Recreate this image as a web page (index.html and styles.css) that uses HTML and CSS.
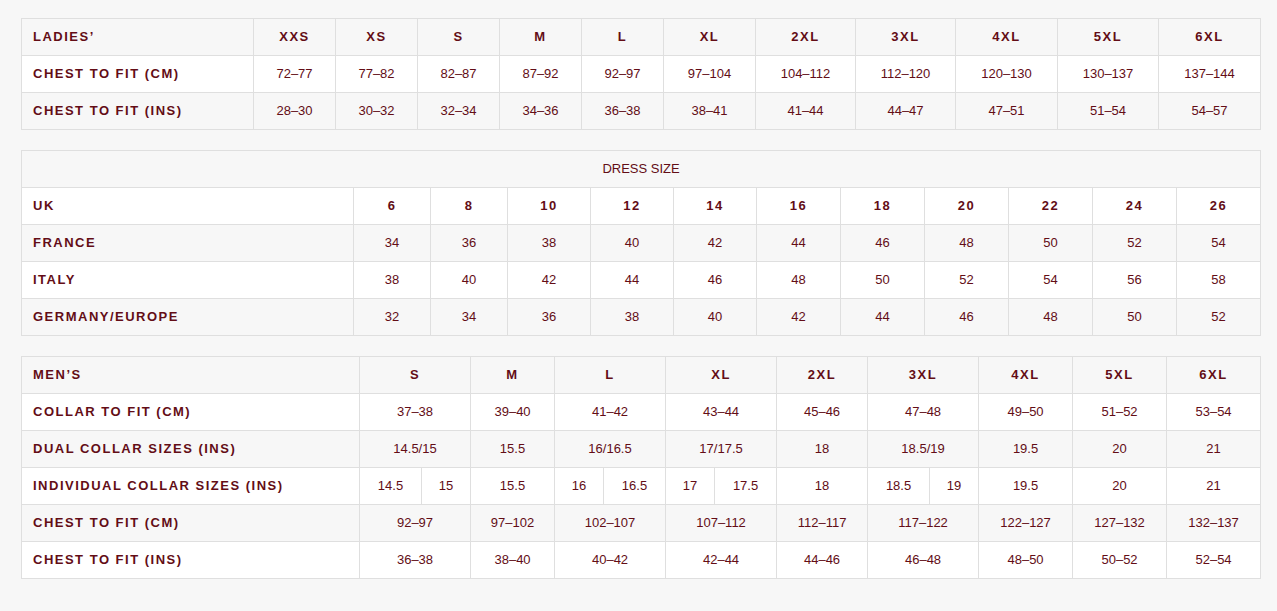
FILE: index.html
```html
<!DOCTYPE html>
<html lang="en">
<head>
<meta charset="utf-8">
<title>Size Guide</title>
<link rel="stylesheet" href="styles.css">
</head>
<body>
<main class="page">
  <table class="chart chart-ladies">
    <colgroup>
      <col class="c-label"><col class="w82"><col class="w82"><col class="w82"><col class="w82"><col class="w82"><col class="w92"><col class="w100"><col class="w100"><col class="w102"><col class="w101"><col class="w102">
    </colgroup>
    <tr class="row-grey">
      <th class="label">LADIES’</th><th>XXS</th><th>XS</th><th>S</th><th>M</th><th>L</th><th>XL</th><th>2XL</th><th>3XL</th><th>4XL</th><th>5XL</th><th>6XL</th>
    </tr>
    <tr class="row-white">
      <th class="label">CHEST TO FIT (CM)</th><td>72–77</td><td>77–82</td><td>82–87</td><td>87–92</td><td>92–97</td><td>97–104</td><td>104–112</td><td>112–120</td><td>120–130</td><td>130–137</td><td>137–144</td>
    </tr>
    <tr class="row-grey">
      <th class="label">CHEST TO FIT (INS)</th><td>28–30</td><td>30–32</td><td>32–34</td><td>34–36</td><td>36–38</td><td>38–41</td><td>41–44</td><td>44–47</td><td>47–51</td><td>51–54</td><td>54–57</td>
    </tr>
  </table>

  <table class="chart chart-dress">
    <colgroup>
      <col class="c-label2"><col class="w77"><col class="w77"><col class="w83"><col class="w83"><col class="w83"><col class="w84"><col class="w84"><col class="w84"><col class="w84"><col class="w84"><col class="w84">
    </colgroup>
    <tr class="row-grey">
      <td class="caption" colspan="12">DRESS SIZE</td>
    </tr>
    <tr class="row-white">
      <th class="label">UK</th><th>6</th><th>8</th><th>10</th><th>12</th><th>14</th><th>16</th><th>18</th><th>20</th><th>22</th><th>24</th><th>26</th>
    </tr>
    <tr class="row-grey">
      <th class="label">FRANCE</th><td>34</td><td>36</td><td>38</td><td>40</td><td>42</td><td>44</td><td>46</td><td>48</td><td>50</td><td>52</td><td>54</td>
    </tr>
    <tr class="row-white">
      <th class="label">ITALY</th><td>38</td><td>40</td><td>42</td><td>44</td><td>46</td><td>48</td><td>50</td><td>52</td><td>54</td><td>56</td><td>58</td>
    </tr>
    <tr class="row-grey">
      <th class="label">GERMANY/EUROPE</th><td>32</td><td>34</td><td>36</td><td>38</td><td>40</td><td>42</td><td>44</td><td>46</td><td>48</td><td>50</td><td>52</td>
    </tr>
  </table>

  <table class="chart chart-mens">
    <colgroup>
      <col class="c-label3"><col class="w62"><col class="w49"><col class="w84"><col class="w49"><col class="w62"><col class="w49"><col class="w62"><col class="w91"><col class="w62"><col class="w49"><col class="w94"><col class="w94"><col class="w94">
    </colgroup>
    <tr class="row-grey">
      <th class="label">MEN’S</th><th colspan="2">S</th><th>M</th><th colspan="2">L</th><th colspan="2">XL</th><th>2XL</th><th colspan="2">3XL</th><th>4XL</th><th>5XL</th><th>6XL</th>
    </tr>
    <tr class="row-white">
      <th class="label">COLLAR TO FIT (CM)</th><td colspan="2">37–38</td><td>39–40</td><td colspan="2">41–42</td><td colspan="2">43–44</td><td>45–46</td><td colspan="2">47–48</td><td>49–50</td><td>51–52</td><td>53–54</td>
    </tr>
    <tr class="row-grey">
      <th class="label">DUAL COLLAR SIZES (INS)</th><td colspan="2">14.5/15</td><td>15.5</td><td colspan="2">16/16.5</td><td colspan="2">17/17.5</td><td>18</td><td colspan="2">18.5/19</td><td>19.5</td><td>20</td><td>21</td>
    </tr>
    <tr class="row-white">
      <th class="label">INDIVIDUAL COLLAR SIZES (INS)</th><td>14.5</td><td>15</td><td>15.5</td><td>16</td><td>16.5</td><td>17</td><td>17.5</td><td>18</td><td>18.5</td><td>19</td><td>19.5</td><td>20</td><td>21</td>
    </tr>
    <tr class="row-grey">
      <th class="label">CHEST TO FIT (CM)</th><td colspan="2">92–97</td><td>97–102</td><td colspan="2">102–107</td><td colspan="2">107–112</td><td>112–117</td><td colspan="2">117–122</td><td>122–127</td><td>127–132</td><td>132–137</td>
    </tr>
    <tr class="row-white">
      <th class="label">CHEST TO FIT (INS)</th><td colspan="2">36–38</td><td>38–40</td><td colspan="2">40–42</td><td colspan="2">42–44</td><td>44–46</td><td colspan="2">46–48</td><td>48–50</td><td>50–52</td><td>52–54</td>
    </tr>
  </table>
</main>
</body>
</html>
```

FILE: styles.css
```css
html, body {
  margin: 0;
  padding: 0;
  background: #f7f7f7;
}

.page {
  display: flex;
  flex-direction: column;
  gap: 20px;
  padding: 18px 16px 0 21px;
  font-family: "Liberation Sans", Arial, sans-serif;
  color: #630d16;
}

.chart {
  width: 1240px;
  table-layout: fixed;
  border-collapse: collapse;
  border: 1px solid #dfdfdf;
  font-size: 13px;
}

.chart th,
.chart td {
  height: 36px;
  padding: 0;
  border: 1px solid #dfdfdf;
  text-align: center;
  vertical-align: middle;
  line-height: 16px;
}

.chart td {
  font-weight: normal;
}

.chart th {
  font-weight: bold;
  letter-spacing: 1.5px;
}

.chart th.label {
  text-align: left;
  padding-left: 11px;
}

.row-grey { background: #f7f7f7; }
.row-white { background: #ffffff; }

.caption {
  text-align: center;
}

.c-label { width: 232px; }
.c-label2 { width: 332px; }
.c-label3 { width: 338px; }
.w49 { width: 49px; }
.w62 { width: 62px; }
.w77 { width: 77px; }
.w82 { width: 82px; }
.w83 { width: 83px; }
.w84 { width: 84px; }
.w91 { width: 91px; }
.w92 { width: 92px; }
.w94 { width: 94px; }
.w100 { width: 100px; }
.w101 { width: 101px; }
.w102 { width: 102px; }
```
